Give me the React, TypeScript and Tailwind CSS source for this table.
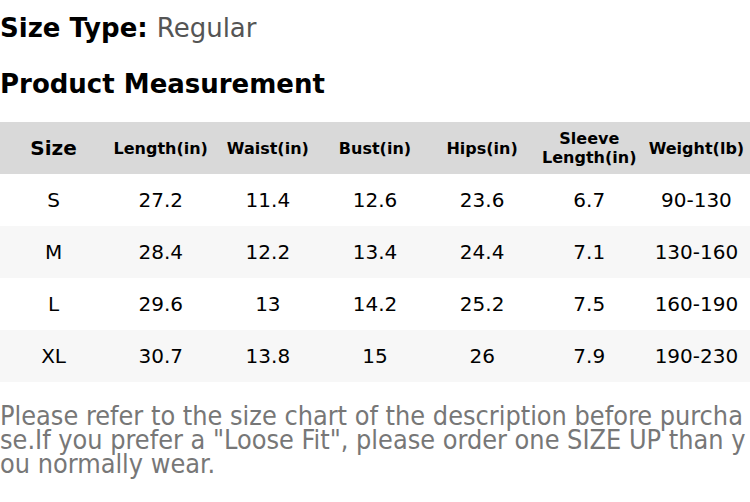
import React from 'react'

const headers = ['Size', 'Length(in)', 'Waist(in)', 'Bust(in)', 'Hips(in)', 'Sleeve Length(in)', 'Weight(lb)']

const rows = [
  ['S', '27.2', '11.4', '12.6', '23.6', '6.7', '90-130'],
  ['M', '28.4', '12.2', '13.4', '24.4', '7.1', '130-160'],
  ['L', '29.6', '13', '14.2', '25.2', '7.5', '160-190'],
  ['XL', '30.7', '13.8', '15', '26', '7.9', '190-230'],
]

export default function App() {
  return (
    <div className="w-[750px] h-[502px] bg-white text-black font-['DejaVu_Sans',sans-serif] overflow-hidden">
      {/* size type */}
      <div className="h-[56px] pt-[10px] text-[26px] leading-[36px]">
        <span className="font-bold">Size Type: </span>
        <span className="text-[#555]">Regular</span>
      </div>
      <div className="h-[66px] pt-[10px] text-[26px] leading-[36px] font-bold">Product Measurement</div>

      {/* table */}
      <div className="grid grid-cols-7 h-[52px] bg-[#d9d9d9] items-center text-center font-bold">
        {headers.map((h, i) => (
          <div key={i} className={i === 0 ? 'text-[20px]' : 'text-[16px] leading-[19px]'}>
            {h}
          </div>
        ))}
      </div>
      {rows.map((r, ri) => (
        <div
          key={ri}
          className={`grid grid-cols-7 h-[52px] items-center text-center text-[20px] ${ri % 2 === 1 ? 'bg-[#f7f7f7]' : 'bg-white'}`}
        >
          {r.map((c, ci) => (
            <div key={ci}>{c}</div>
          ))}
        </div>
      ))}

      {/* note */}
      <p className="mt-[22px] text-[26.8px] leading-[24px] text-[#777] break-all font-['DejaVu_Sans_Condensed','DejaVu_Sans',sans-serif] [font-stretch:condensed]">
        Please refer to the size chart of the description before purchase.If you prefer a "Loose Fit", please order one SIZE UP than you normally wear.
      </p>
    </div>
  )
}
